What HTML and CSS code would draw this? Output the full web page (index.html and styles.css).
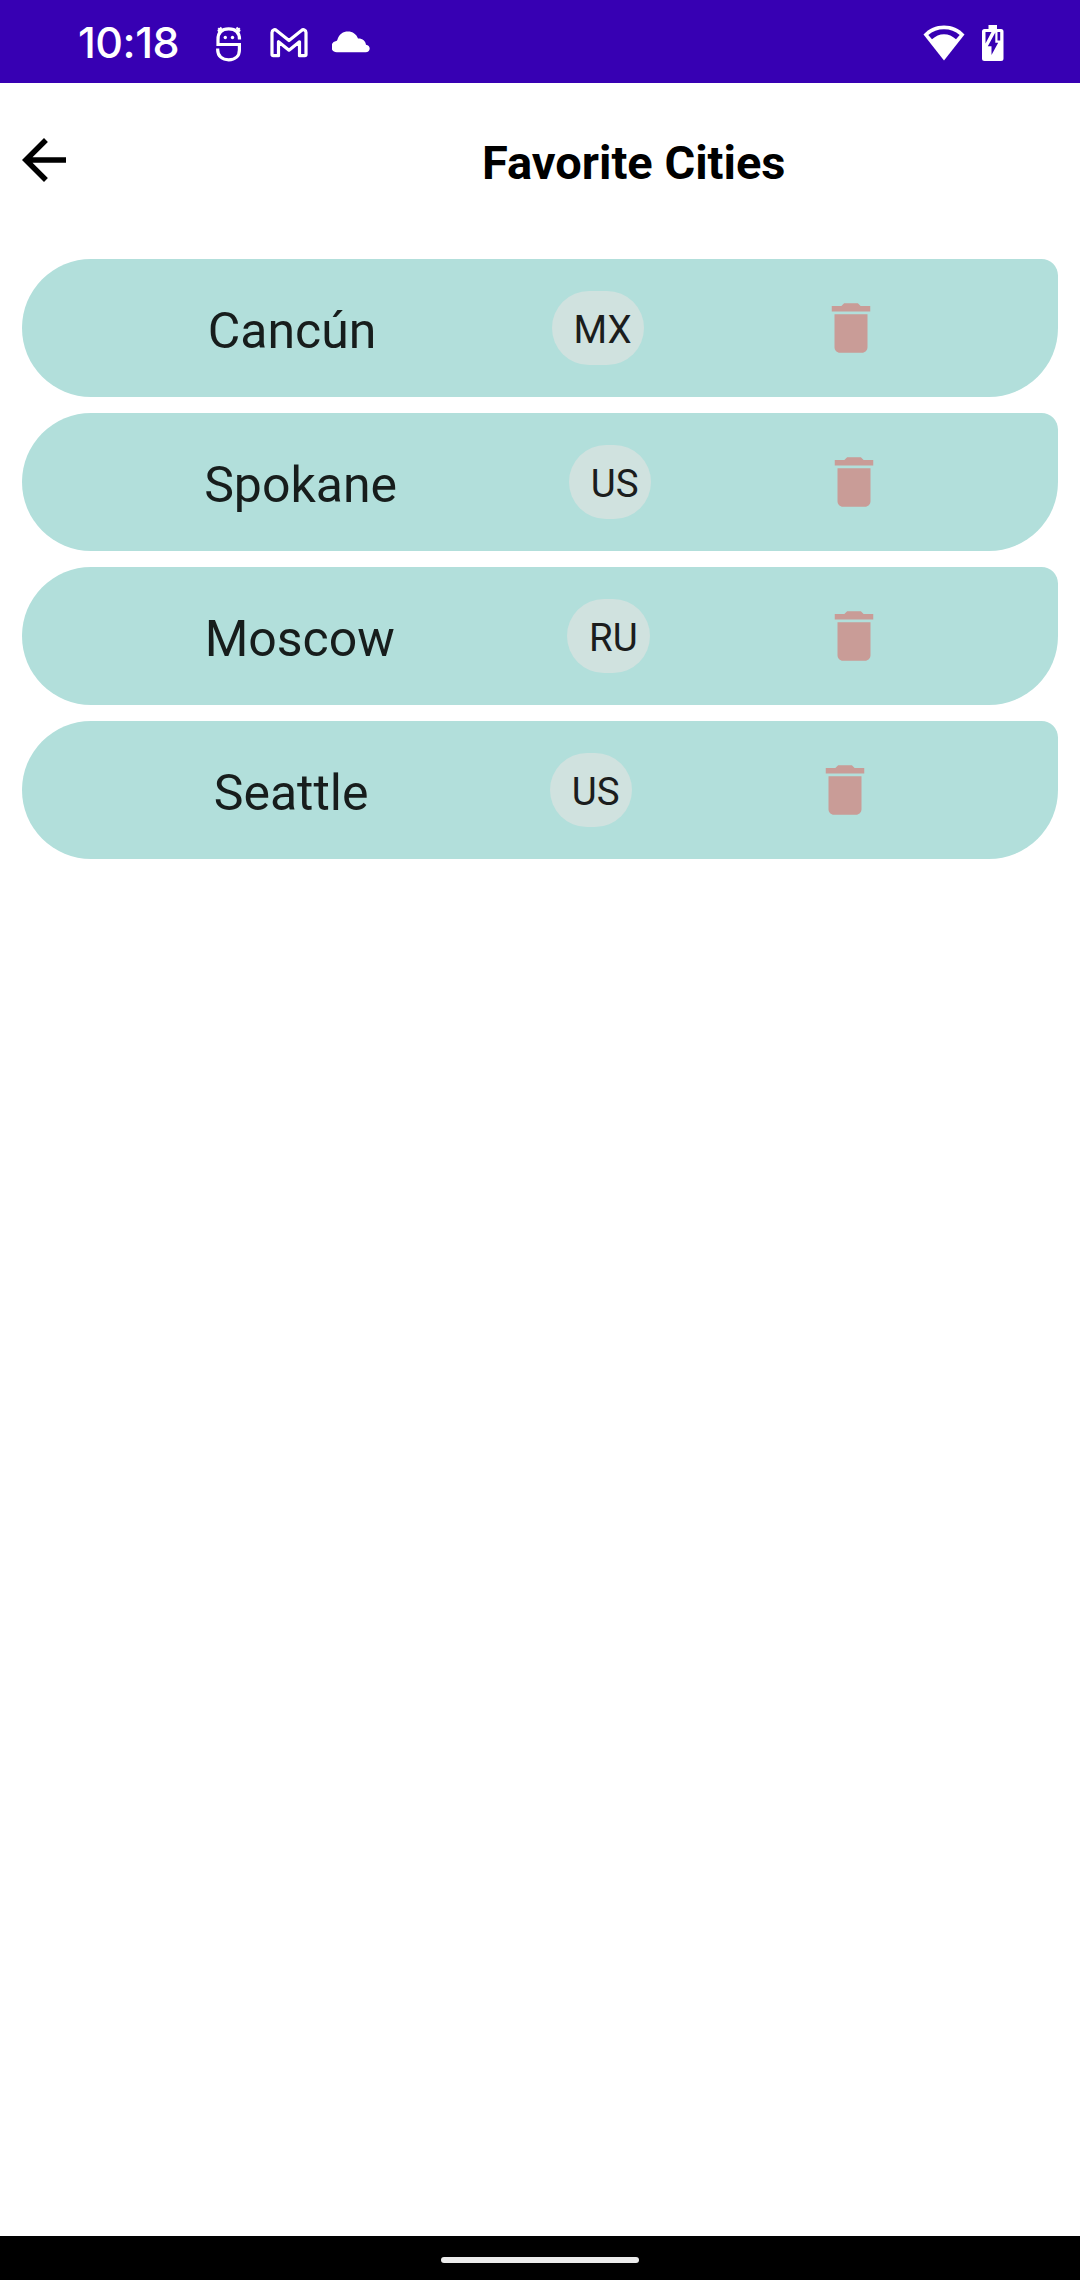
FILE: index.html
```html
<!DOCTYPE html>
<html lang="en">
<head>
<meta charset="utf-8">
<title>Favorite Cities</title>
<link rel="stylesheet" href="styles.css">
</head>
<body>
<svg class="defs" aria-hidden="true"><symbol id="trash" viewBox="0 0 24 24"><path d="M6 19c0 1.100.9 2 2 2h8c1.100 0 2-.9 2-2V7H6v12zM19 4h-3.500l-1-1h-5l-1 1H5v2h14V4z"/></symbol></svg>
<div class="screen">
  <div class="status">
    <span class="clock">10:18</span>
    <svg class="monster" width="26" height="36" viewBox="0 0 26 36" fill="none" stroke="#fff" stroke-width="3.200"><path d="M25 18.500H2V13.500C2 6 6.500 2.900 12.700 2.900S23.500 6 23.500 13.500M1.700 22.500v1.500c0 6 4.500 9.800 11 9.800s10.700-3.800 10.700-9.800V17"/><path d="M2.200 2.200l4 4M23.800 2.200l-4 4M5.500 1.500L2 5.500M20.500 1.500L24 5.500" stroke-width="2"/><circle cx="9.300" cy="11.500" r="1.700" fill="#fff" stroke="none"/><circle cx="16.500" cy="11.500" r="1.700" fill="#fff" stroke="none"/></svg>
    <svg class="mail" width="38" height="30" viewBox="0 0 38 30" fill="none" stroke="#fff" stroke-width="3.200" stroke-linejoin="round"><path d="M2 4.500C2 1.800 4.800 1 6.500 2.500L19 12.500 31.500 2.500C33.200 1 36 1.800 36 4.500V26.500Q36 27.700 34.800 27.700H29.500V13.800L19 22.200 8.500 13.800V27.700H3.200Q2 27.700 2 26.500Z"/></svg>
    <svg class="cloud" width="38" height="22" viewBox="0 0 38 22" fill="#fff"><path d="M5.500 21.300A5.600 5.600 0 0 1 3.500 10.300C5 9.900 5.300 9.300 5.700 7.800 7.300 3.200 11 .5 16 .5c4.700 0 8.500 2.700 10 7 4.500-.2 7.600 2.500 8 6.200 2.300.5 3.700 1.800 3.700 3.800 0 2.200-1.700 3.800-4 3.800z"/></svg>
    <svg class="wifi" width="42" height="36" viewBox="0 0 42 36"><path fill="#fff" d="M21 .5C29 .5 36 3.500 41.500 9.500L21 35.500.5 9.500C6 3.500 13 .5 21 .5z"/><path fill="#3700b3" d="M21 4.200c6 0 11.500 2 15.700 5.700L33 14.300C29.500 11.200 25.500 9.300 21 9.300S12.500 11.200 9 14.300L5.300 9.900C9.500 6.200 15 4.200 21 4.200z"/></svg>
    <svg class="battery" width="22" height="36" viewBox="0 0 22 36"><path fill="#fff" d="M6.500 0h8.500v4h4q2.500 0 2.500 2.500V33.500q0 2.500-2.500 2.500H2.500Q0 36 0 33.500V6.500Q0 4 2.500 4h4z"/><path fill="#3700b3" d="M3.500 7H9.500L3.500 18.500zM15.500 7h2.700v8.500h-2.700zM13.300 7.500V17.700H16.200L9.500 30V21.300H5.800z"/></svg>
  </div>
  <header class="bar">
    <svg class="back" width="66" height="66" viewBox="0 0 24 24"><path d="M20 11H7.830l5.590-5.590L12 4l-8 8 8 8 1.410-1.410L7.830 13H20v-2z"/></svg>
    <h1 class="title">Favorite Cities</h1>
  </header>
  <main class="list">
    <div class="card"><span class="city">Cancún</span><span class="code">MX</span><span class="del"><svg width="66" height="66"><use href="#trash"/></svg></span></div>
    <div class="card"><span class="city">Spokane</span><span class="code">US</span><span class="del"><svg width="66" height="66"><use href="#trash"/></svg></span></div>
    <div class="card"><span class="city">Moscow</span><span class="code">RU</span><span class="del"><svg width="66" height="66"><use href="#trash"/></svg></span></div>
    <div class="card"><span class="city">Seattle</span><span class="code">US</span><span class="del"><svg width="66" height="66"><use href="#trash"/></svg></span></div>
  </main>
  <footer class="nav"><span class="handle"></span></footer>
</div>
</body>
</html>
```
FILE: styles.css
```css
* { box-sizing: border-box; }
body { margin: 0; background: #fff; font-family: Roboto, sans-serif; }
svg { display: block; flex: none; }
.defs { display: none; }
.screen { width: 1080px; height: 2280px; display: flex; flex-direction: column; }
.status { height: 83px; background: #3700b3; display: flex; align-items: flex-start; padding: 25px 76px 0 78px; }
.clock { width: 138px; color: #fff; font: 500 43px/35px Inter, sans-serif; letter-spacing: -0.5px; white-space: nowrap; }
.monster { margin-top: 1px; }
.mail { margin: 3px 0 0 28px; }
.cloud { margin: 6px 0 0 24px; }
.wifi { margin-left: auto; }
.battery { margin-left: 17px; }
.bar { height: 154px; display: flex; align-items: center; padding: 0 11px; }
.title { margin: 6px 0 0 405px; font-size: 47px; line-height: 64px; font-weight: 700; color: #000; white-space: nowrap; }
.list { flex: 1; display: flex; flex-direction: column; gap: 16px; padding: 22px; }
.card { height: 138px; display: flex; align-items: center; justify-content: space-evenly; background: #b2dfdb; border-radius: 69px 16.500px 69px 69px; }
.city { padding: 6px 34px 0 44.500px; font-size: 50px; line-height: 66px; color: #171d1c; }
.code { height: 74px; padding: 2px 12px 0 22px; border-radius: 37px; background: #d0e2df; color: #1b1d1d; font-size: 38.500px; line-height: 74px; }
.del { width: 132px; display: flex; justify-content: center; fill: #c99c97; }
.nav { height: 44px; background: #000; display: flex; justify-content: center; padding-top: 21px; }
.handle { width: 198px; height: 6px; border-radius: 3px; background: #ececec; }
```
